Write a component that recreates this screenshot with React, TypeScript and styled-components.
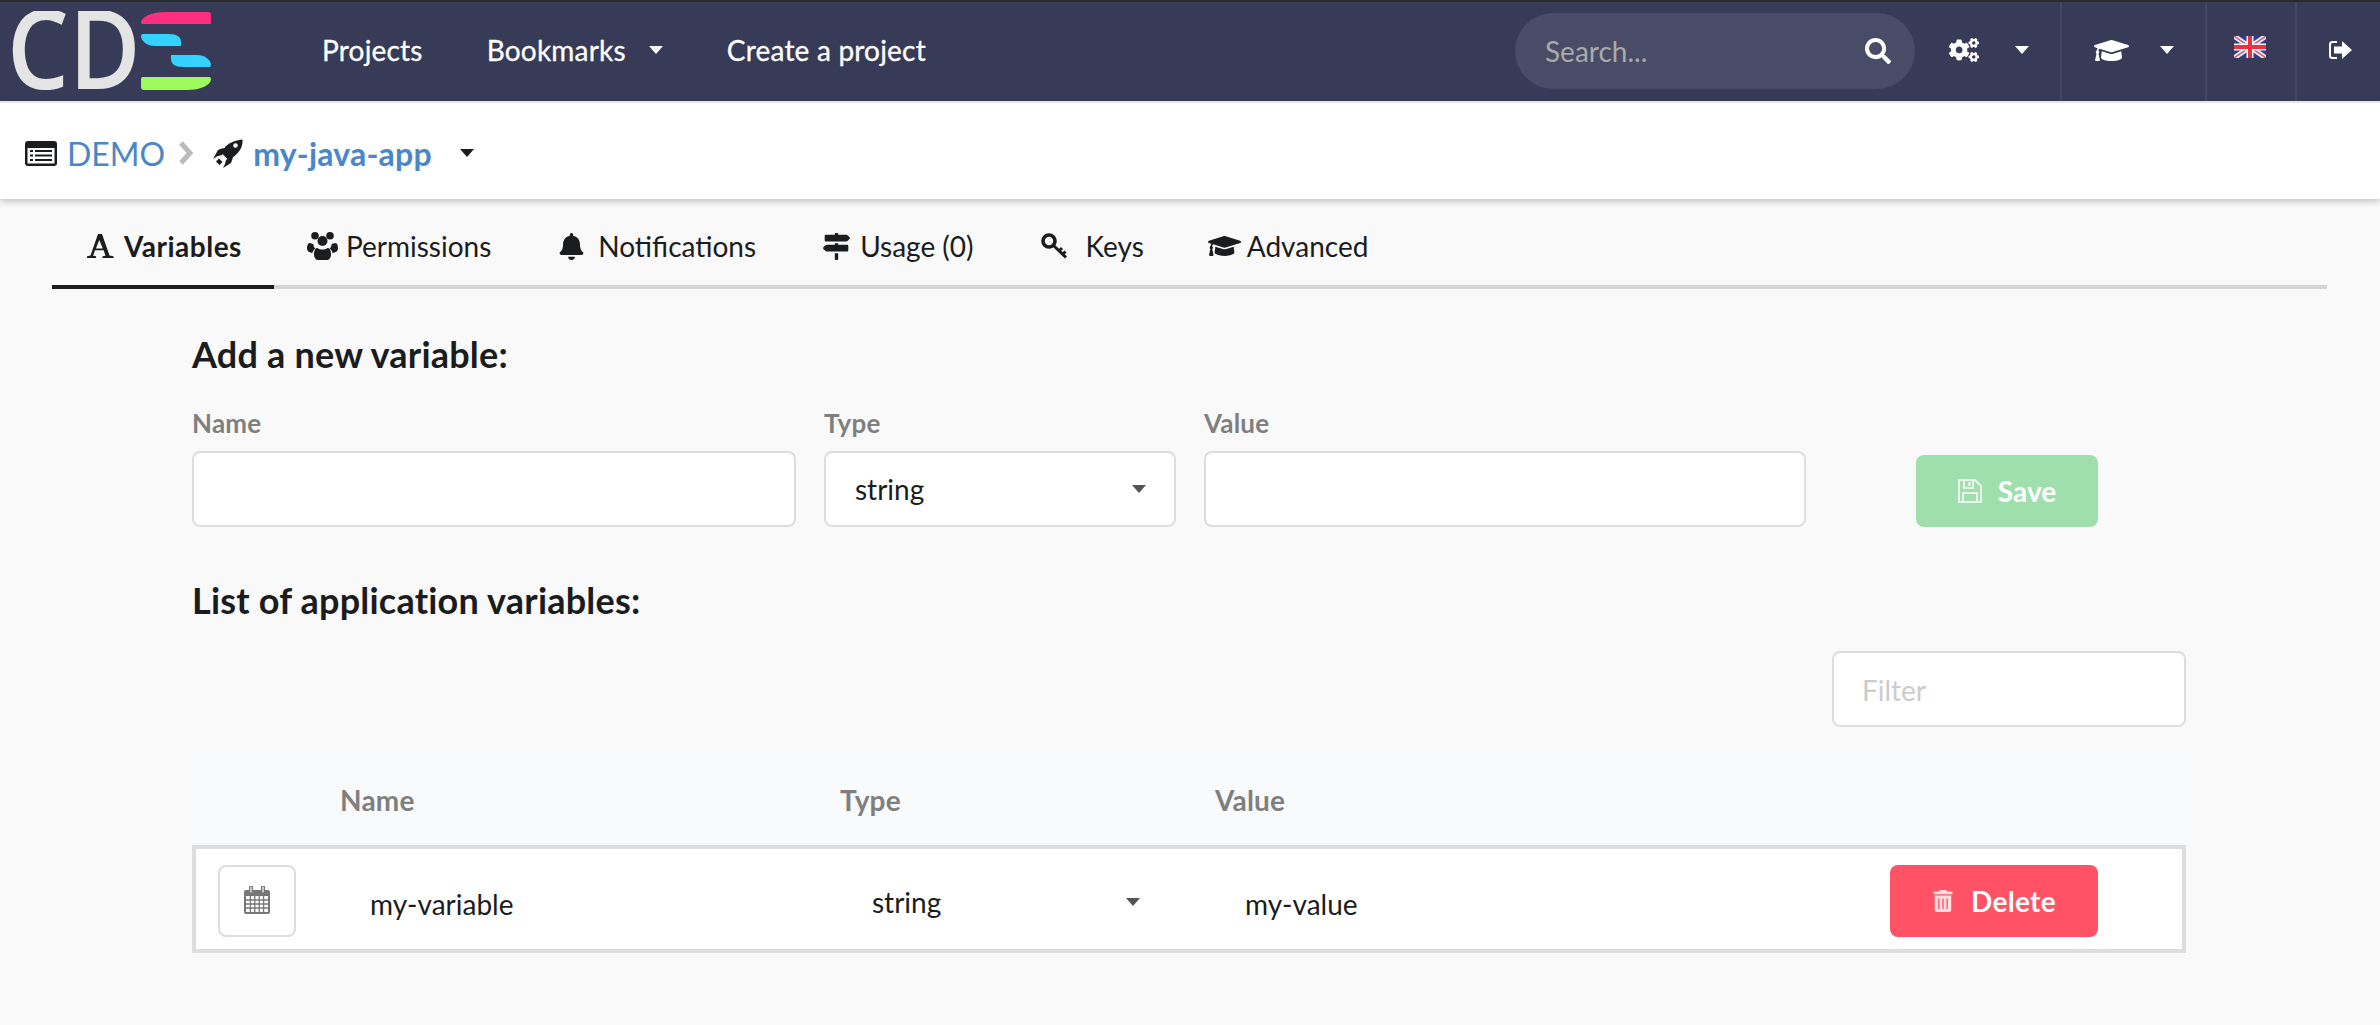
import styled, {createGlobalStyle} from "styled-components";
import {FaBell, FaCogs, FaGraduationCap, FaMapSigns, FaSearch, FaTrashAlt} from "react-icons/fa";

const GlobalStyle = createGlobalStyle`
    * {
        box-sizing: border-box;
    }
    html, body {
        margin: 0;
        background: #f9f9f9;
        font-family: "Lato", "Liberation Sans", sans-serif;
        font-size: 28px;
        color: #1b1c1d;
    }
    input::placeholder {
        color: #ccc;
        opacity: 1;
    }
`

const FontA = () => (
    <svg width="27" height="24" viewBox="0 0 27 24" fill="currentColor">
        <path d="M11 0h4l7.500 21.500 4 .8V24H15.500v-1.700l3-.6-1.800-5.500H8l-1.900 5.500 3 .6V24H0v-1.700l3.500-.8zM12.300 6 8.900 14.500h6.900z"/>
    </svg>
)

const UsersIcon = () => (
    <svg width="31" height="28" viewBox="0 0 31 28" fill="currentColor">
        <circle cx="8" cy="3.800" r="3.800"/>
        <circle cx="23" cy="3.800" r="3.800"/>
        <circle cx="15.500" cy="9" r="5"/>
        <path d="M0 16c0-3 1-5 3-5 1 0 2 .8 3.400 1 0 2 .8 3.500 2 4.500-1.500 1-2.600 2.500-3 4.500C2.500 20.500 0 19.500 0 16zM31 16c0-3-1-5-3-5-1 0-2 .8-3.400 1 0 2-.8 3.500-2 4.500 1.500 1 2.600 2.500 3 4.500 2.900-.5 5.400-1.500 5.400-5zM10.500 16c1.300 1 3 1.600 5 1.600s3.700-.6 5-1.600c2.300 0 3.500 2.500 3.500 6.500 0 3.500-1.800 5.500-4.500 5.500h-8C8.800 28 7 26 7 22.500 7 18.500 8.200 16 10.500 16z"/>
    </svg>
)

const KeyIcon = () => (
    <svg width="27" height="26" viewBox="0 0 27 26" fill="none" stroke="currentColor">
        <circle cx="8" cy="8" r="6" strokeWidth="3.600"/>
        <path d="M12.500 12.500 25 24.500M18 18l3-3M21.500 21.500l3-3" strokeWidth="3"/>
    </svg>
)

const ListAlt = () => (
    <svg width="32" height="25" viewBox="0 0 32 25">
        <rect width="32" height="25" rx="3" fill="#1b1c1d"/>
        <rect x="2.500" y="7" width="27" height="15.500" fill="#fff"/>
        <path d="M5 10h3M10 10h17M5 14.500h3M10 14.500h17M5 19h3M10 19h17" stroke="#1b1c1d" strokeWidth="2.200"/>
    </svg>
)

const RocketIcon = () => (
    <svg width="30" height="29" viewBox="0 0 30 29" fill="#1b1c1d">
        <path d="M29.500.5C24 1 17 3 12.500 7.500L8.500 14l7 7c4-2 8.500-5.500 11.500-10 2-3 3-8 2.500-10.500z"/>
        <path d="M0 20l5-9q3-2 8-2l-4 7q-5 .5-9 4zM10 29l8-5q2-4 2-8l-7 5q-.5 4-3 8zM3 22.500l3-3 3.500 3.500-3 3z"/>
        <circle cx="22.500" cy="6.500" r="2.300" fill="#fff"/>
    </svg>
)

const SignOut = () => (
    <svg width="24" height="20" viewBox="0 0 24 20" fill="#fff">
        <path d="M9 2H4.500A2.500 2.500 0 0 0 2 4.500v11A2.500 2.500 0 0 0 4.500 18H9" fill="none" stroke="#fff" strokeWidth="2"/>
        <path d="M6 6.500h8V1l10 9-10 9v-5.500H6z"/>
    </svg>
)

const SaveIcon = () => (
    <svg width="24" height="24" viewBox="0 0 24 24" fill="none" stroke="#e8f7eb" strokeWidth="2">
        <path d="M1 1h16l6 6v16H1z"/>
        <path d="M6 1v8h9V1M5 23v-9h14v9"/>
        <path d="M11.500 3v4" strokeWidth="2.500"/>
    </svg>
)

const CalendarIcon = () => (
    <svg width="26" height="28" viewBox="0 0 26 28">
        <path d="M2 4h22a2 2 0 0 1 2 2v20a2 2 0 0 1-2 2H2a2 2 0 0 1-2-2V6a2 2 0 0 1 2-2z" fill="#777"/>
        <path d="M7 0v7M19 0v7" stroke="#777" strokeWidth="4" strokeLinecap="round"/>
        <path d="M7 1v5M19 1v5" stroke="#fff" strokeWidth="1.200" strokeLinecap="round"/>
        <rect x="2" y="10" width="22" height="16" fill="#fff"/>
        <path d="M2 14h22M2 18h22M2 22h22M6.400 10v16M10.800 10v16M15.200 10v16M19.600 10v16" stroke="#777" strokeWidth="1.300"/>
    </svg>
)

const UkFlag = () => (
    <FlagSvg width="32" height="22" viewBox="0 0 32 22">
        <rect width="32" height="22" fill="#2a3f8f"/>
        <path d="M0 0l32 22M32 0L0 22" stroke="#f2f2f6" strokeWidth="5"/>
        <path d="M0 0l32 22M32 0L0 22" stroke="#d9576b" strokeWidth="1.500"/>
        <path d="M16 0v22M0 11h32" stroke="#f6f6f6" strokeWidth="7"/>
        <path d="M16 0v22M0 11h32" stroke="#ee2f42" strokeWidth="4"/>
    </FlagSvg>
)

const LogoMark = () => (
    <svg width="204" height="82" viewBox="0 0 204 82">
        <text
            x="0"
            y="78"
            transform="scale(0.88 1)"
            fontFamily="'Open Sans', sans-serif"
            fontSize="111"
            fontWeight="600"
            fill="#e4e4e4"
        >
            CD
        </text>
        <g transform="translate(134 0)">
            <path d="M0 12C0 6 10 1 24 1h43a3 3 0 0 1 3 3v8a1 1 0 0 1-1 1H2a2 2 0 0 1-2-1z" fill="#ff2d7e"/>
            <path d="M2 23h26c8 0 12 3 12 8v4H14C6 35 0 30 0 25a2 2 0 0 1 2-2z" fill="#33d2ff"/>
            <path d="M30 44h26c8 0 14 5 14 10a2 2 0 0 1-2 2H42c-8 0-12-3-12-8z" fill="#33d2ff"/>
            <path d="M2 66h66a2 2 0 0 1 2 2c0 6-10 11-24 11H3a3 3 0 0 1-3-3v-8a2 2 0 0 1 2-2z" fill="#9dfa5c"/>
        </g>
    </svg>
)

export default function App() {
    return (
        <>
            <GlobalStyle/>
            <Header>
                <Logo>
                    <LogoMark/>
                </Logo>
                <MainNav>
                    <NavLink>Projects</NavLink>
                    <NavLink>Bookmarks<Caret $color="#fff" $gap={23}/></NavLink>
                    <NavLink>Create a project</NavLink>
                </MainNav>
                <RightNav>
                    <SearchBox>
                        <SearchInput placeholder="Search..."/>
                        <FaSearch size={26} color="#fff"/>
                    </SearchBox>
                    <IconItem $left={34} $right={31} $divider>
                        <FaCogs size={30} color="#fff"/>
                        <Caret $color="#fff" $gap={36}/>
                    </IconItem>
                    <IconItem $left={32} $right={31} $divider>
                        <FaGraduationCap size={35} color="#fff"/>
                        <Caret $color="#fff" $gap={31}/>
                    </IconItem>
                    <IconItem $left={27} $right={29} $divider>
                        <UkFlag/>
                    </IconItem>
                    <IconItem $left={31} $right={28}>
                        <SignOut/>
                    </IconItem>
                </RightNav>
            </Header>
            <Breadcrumb>
                <ListAlt/>
                <CrumbLink>DEMO</CrumbLink>
                <CrumbSep viewBox="0 0 16 24" width="16" height="24">
                    <path d="M3 2l9 10-9 10" fill="none" stroke="#bbb" strokeWidth="5"/>
                </CrumbSep>
                <RocketIcon/>
                <CrumbApp>my-java-app</CrumbApp>
                <Caret $color="#1b1c1d" $gap={28}/>
            </Breadcrumb>
            <Tabs>
                <Tab $active><TabIcon><FontA/></TabIcon>Variables</Tab>
                <Tab><TabIcon><UsersIcon/></TabIcon>Permissions</Tab>
                <Tab><TabIcon $gap={10}><FaBell size={27}/></TabIcon>Notifications</Tab>
                <Tab><TabIcon><FaMapSigns size={27}/></TabIcon>Usage (0)</Tab>
                <Tab><TabIcon $gap={15}><KeyIcon/></TabIcon>Keys</Tab>
                <Tab><TabIcon $gap={6}><FaGraduationCap size={36}/></TabIcon>Advanced</Tab>
            </Tabs>
            <Content>
                <Heading>Add a new variable:</Heading>
                <FormRow>
                    <Field $width={604}>
                        <Label>Name</Label>
                        <TextInput/>
                    </Field>
                    <Field $width={352}>
                        <Label>Type</Label>
                        <SelectBox>string<Caret $color="#555"/></SelectBox>
                    </Field>
                    <Field $width={602}>
                        <Label>Value</Label>
                        <TextInput/>
                    </Field>
                    <SaveButton><SaveIcon/>Save</SaveButton>
                </FormRow>
                <ListHeading>List of application variables:</ListHeading>
                <FilterRow>
                    <FilterInput placeholder="Filter"/>
                </FilterRow>
                <TableHead>
                    <span/>
                    <HeadCell>Name</HeadCell>
                    <HeadCell>Type</HeadCell>
                    <HeadCell>Value</HeadCell>
                </TableHead>
                <TableRow>
                    <IconCell>
                        <CalendarButton><CalendarIcon/></CalendarButton>
                    </IconCell>
                    <ValueCell>my-variable</ValueCell>
                    <TypeCell>string<Caret $color="#555"/></TypeCell>
                    <ValueCell $pad={30}>my-value</ValueCell>
                    <ActionCell>
                        <DeleteButton><FaTrashAlt size={22} color="#ffdde1"/>Delete</DeleteButton>
                    </ActionCell>
                </TableRow>
            </Content>
        </>
    );
};

const Header = styled.header`
    display: flex;
    align-items: stretch;
    height: 101px;
    background: #373b57;
    border-top: 2px solid #2b2b2b;
    color: #fff;
`

const Logo = styled.div`
    width: 322px;
    display: flex;
    align-items: flex-start;
    padding: 9px 0 0 7px;
`

const MainNav = styled.nav`
    display: flex;
    align-items: center;
    gap: 64px;
    padding-bottom: 3px;
`

const NavLink = styled.a`
    display: flex;
    align-items: center;
    font-size: 28px;
    line-height: 40px;
    letter-spacing: 0.2px;
    -webkit-text-stroke: 0.3px #fff;
`

const Caret = styled.span<{$color: string; $gap?: number}>`
    display: inline-block;
    width: 0;
    height: 0;
    margin-left: ${p => p.$gap ?? 0}px;
    border-left: 7px solid transparent;
    border-right: 7px solid transparent;
    border-top: 8px solid ${p => p.$color};
`

const RightNav = styled.div`
    margin-left: auto;
    display: flex;
    align-items: stretch;
`

const SearchBox = styled.div`
    width: 400px;
    height: 76px;
    align-self: center;
    margin-top: -2px;
    display: flex;
    align-items: center;
    padding: 0 24px 0 30px;
    border-radius: 38px;
    background: #484c66;
`

const SearchInput = styled.input`
    flex: 1;
    min-width: 0;
    border: none;
    outline: none;
    background: none;
    padding: 0;
    font: 28px "Lato", sans-serif;
    color: #fff;

    &::placeholder {
        color: #aaa;
    }
`

const IconItem = styled.div<{$left: number; $right: number; $divider?: boolean}>`
    display: flex;
    align-items: center;
    padding: 0 ${p => p.$right}px 3px ${p => p.$left}px;
    border-right: ${p => (p.$divider ? "2px solid #434763" : "none")};
`

const FlagSvg = styled.svg`
    filter: blur(0.5px);
    margin-top: -6px;
`

const Breadcrumb = styled.div`
    height: 98px;
    display: flex;
    align-items: center;
    padding: 4px 0 0 25px;
    background: #fff;
    border-top: 2px solid #e5e5e5;
    box-shadow: 0 3px 6px rgba(0, 0, 0, 0.2);
    position: relative;
`

const CrumbLink = styled.a`
    margin-left: 10px;
    font-size: 32px;
    color: #4a86c8;
`

const CrumbSep = styled.svg`
    margin: 0 19px 0 13px;
`

const CrumbApp = styled.a`
    margin-left: 10px;
    font-size: 32px;
    font-weight: 700;
    letter-spacing: 0.2px;
    color: #4a86c8;
`

const Tabs = styled.div`
    height: 90px;
    margin: 0 53px 0 52px;
    padding-top: 8px;
    display: flex;
    border-bottom: 4px solid #d5d5d5;
`

const Tab = styled.a<{$active?: boolean}>`
    display: flex;
    align-items: center;
    padding: 0 32px;
    margin-bottom: -4px;
    border-bottom: 4px solid ${p => (p.$active ? "#1b1c1d" : "transparent")};
    font-weight: ${p => (p.$active ? 700 : 400)};
    letter-spacing: ${p => (p.$active ? "0.5px" : "0")};
    color: #1b1c1d;
`

const TabIcon = styled.span<{$gap?: number}>`
    width: 33px;
    margin-right: ${p => p.$gap ?? 7}px;
    display: flex;
    justify-content: center;
    flex: none;
`

const Content = styled.main`
    padding: 45px 194px 0 192px;
`

const Heading = styled.h3`
    margin: 0;
    font-size: 36px;
    line-height: 40px;
    font-weight: 700;
    letter-spacing: 0.2px;
`

const ListHeading = styled(Heading)`
    margin-top: 53px;
`

const FormRow = styled.div`
    display: flex;
    gap: 28px;
    margin-top: 34px;
`

const Field = styled.div<{$width: number}>`
    width: ${p => p.$width}px;
`

const Label = styled.label`
    display: block;
    margin-bottom: 13px;
    font-size: 26px;
    line-height: 30px;
    font-weight: 700;
    letter-spacing: 0.2px;
    color: #7f7f7f;
`

const TextInput = styled.input`
    display: block;
    width: 100%;
    height: 76px;
    border: 2px solid #ddd;
    border-radius: 8px;
    background: #fff;
    outline: none;
    padding: 0 28px;
    font: 28px "Lato", sans-serif;
`

const SelectBox = styled.div`
    height: 76px;
    display: flex;
    align-items: center;
    justify-content: space-between;
    padding: 0 28px 0 29px;
    border: 2px solid #ddd;
    border-radius: 8px;
    background: #fff;
`

const SaveButton = styled.button`
    align-self: flex-end;
    width: 182px;
    height: 72px;
    margin-left: 82px;
    display: flex;
    align-items: center;
    justify-content: center;
    gap: 16px;
    border: none;
    border-radius: 8px;
    background: #9fdfae;
    color: #fff;
    font: 700 28px "Lato", sans-serif;
`

const FilterRow = styled.div`
    display: flex;
    justify-content: flex-end;
    margin-top: 31px;
`

const FilterInput = styled(TextInput)`
    width: 354px;
    padding-top: 2px;
`

const TableHead = styled.div`
    display: grid;
    grid-template-columns: 148px 500px 375px 1fr;
    align-items: center;
    height: 90px;
    margin-top: 28px;
    background: #f9fafb;
`

const HeadCell = styled.span`
    font-size: 28px;
    font-weight: 700;
    letter-spacing: 0.2px;
    color: #7f7f7f;
`

const TableRow = styled.div`
    display: grid;
    grid-template-columns: 144px 500px 375px 1fr auto;
    align-items: center;
    height: 108px;
    padding-top: 4px;
    border: 4px solid #ddd;
    background: #fff;
`

const IconCell = styled.div`
    padding-left: 22px;
`

const CalendarButton = styled.button`
    width: 78px;
    height: 72px;
    display: flex;
    align-items: center;
    justify-content: center;
    padding: 0 0 2px;
    border: 2px solid #ddd;
    border-radius: 8px;
    background: #fff;
`

const ValueCell = styled.div<{$pad?: number}>`
    padding: 6px 0 0 ${p => p.$pad ?? 30}px;
`

const TypeCell = styled.div`
    display: flex;
    align-items: center;
    justify-content: space-between;
    padding: 2px 75px 0 32px;
`

const ActionCell = styled.div`
    padding-right: 84px;
`

const DeleteButton = styled.button`
    width: 208px;
    height: 72px;
    display: flex;
    align-items: center;
    justify-content: center;
    gap: 17px;
    border: none;
    border-radius: 8px;
    background: #ff5265;
    color: #fff;
    font: 700 28px "Lato", sans-serif;
    letter-spacing: 0.3px;
`
